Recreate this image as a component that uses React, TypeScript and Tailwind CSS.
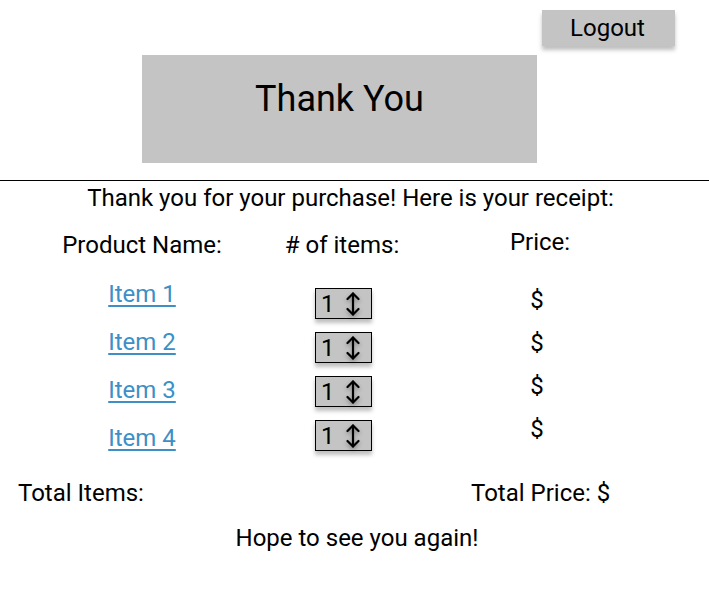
const items = ["Item 1", "Item 2", "Item 3", "Item 4"];

const UpDown = () => (
  <svg
    width="14"
    height="26"
    viewBox="0 0 14 26"
    fill="none"
    stroke="black"
    strokeWidth="2.2"
    strokeLinecap="round"
    strokeLinejoin="round"
    className="drop-shadow-[0_2px_2px_rgba(0,0,0,0.35)]"
  >
    <path d="M7 2.5v21" />
    <path d="M1.5 8l5.5-5.5 5.5 5.5" />
    <path d="M1.5 18l5.5 5.5 5.5-5.5" />
  </svg>
);

const Spinner = () => (
  <div className="flex items-center h-[31px] w-[57px] border border-black bg-[#c4c4c4] shadow-[0_4px_4px_rgba(0,0,0,0.25)] pl-[5px]">
    <span className="text-[24px] leading-none">1</span>
    <span className="ml-[11px]">
      <UpDown />
    </span>
  </div>
);

const App = () => {
  return (
    <div className="w-[709px] h-[604px] bg-white text-black font-['Roboto',sans-serif] overflow-hidden">
      <div className="flex justify-end pt-[10px] pr-[34px]">
        <button className="w-[133px] h-[36px] bg-[#c4c4c4] shadow-[0_4px_4px_rgba(0,0,0,0.25)] text-[24px] leading-none pr-[2px]">
          Logout
        </button>
      </div>

      <div className="ml-[142px] mt-[9px] w-[395px] h-[108px] bg-[#c4c4c4] flex justify-center pt-[23px]">
        <h1 className="text-[36px] leading-[42px]">Thank You</h1>
      </div>

      <div className="mt-[17px] h-px bg-black" />

      <p className="text-center text-[24px] leading-[28px] mt-[3px] pr-[8px]">
        Thank you for your purchase! Here is your receipt:
      </p>

      <div className="grid grid-cols-[200px_200px_196px] ml-[42px] mt-[19px] text-[24px]">
        <div className="flex flex-col items-center">
          <span className="leading-[28px]">Product Name:</span>
          <div className="flex flex-col items-center gap-[20px] mt-[21px]">
            {items.map((it) => (
              <a key={it} href="#" className="text-[#3d8fc6] underline underline-offset-[3px] leading-[28px]">
                {it}
              </a>
            ))}
          </div>
        </div>

        <div className="flex flex-col items-center">
          <span className="leading-[28px]"># of items:</span>
          <div className="flex flex-col items-center gap-[13px] mt-[29px] ml-[3px]">
            {items.map((it) => (
              <Spinner key={it} />
            ))}
          </div>
        </div>

        <div className="flex flex-col items-center -mt-[3px]">
          <span className="leading-[28px]">Price:</span>
          <div className="flex flex-col items-center gap-[15px] mt-[30px] mr-[6px]">
            {items.map((it) => (
              <span key={it} className="leading-[28px]">$</span>
            ))}
          </div>
        </div>
      </div>

      <div className="flex text-[24px] leading-[28px] mt-[27px] pl-[18px]">
        <span className="w-[453px]">Total Items:</span>
        <span>Total Price: $</span>
      </div>

      <p className="text-center text-[24px] leading-[28px] mt-[17px] pl-[5px]">
        Hope to see you again!
      </p>
    </div>
  );
};

export default App;
